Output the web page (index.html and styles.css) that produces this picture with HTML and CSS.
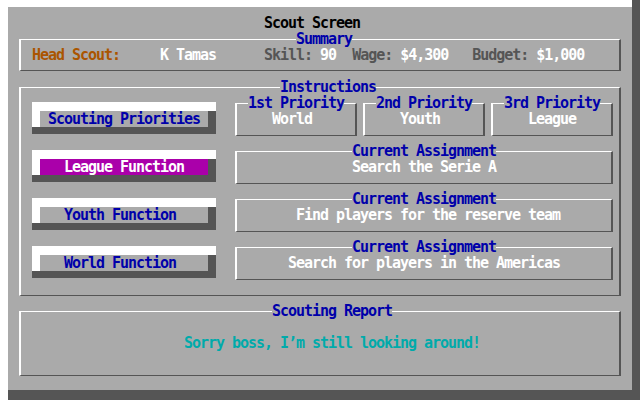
FILE: index.html
```html
<!DOCTYPE html>
<html lang="en">
<head>
<meta charset="utf-8">
<title>Scout Screen</title>
<link rel="stylesheet" href="styles.css">
</head>
<body>
<div class="frame">
  <main class="panel">
    <h1 class="title">Scout Screen</h1>

    <section class="box summary">
      <div class="legend-row shift-r4"><span class="legend">Summary</span></div>
      <div class="summary-line"><span class="orange">Head Scout:</span>     <span class="white">K Tamas</span>      <span class="grey">Skill:</span> <span class="white">90</span>  <span class="grey">Wage:</span> <span class="white">$4,300</span>   <span class="grey">Budget:</span> <span class="white">$1,000</span></div>
    </section>

    <section class="box instructions">
      <div class="legend-row shift-r8"><span class="legend">Instructions</span></div>
      <div class="instr-grid">
        <button class="btn"><span class="face">Scouting Priorities</span></button>
        <div class="priorities">
          <div class="box group">
            <div class="legend-row"><span class="legend">1st Priority</span></div>
            <div class="value shift-l4">World</div>
          </div>
          <div class="box group">
            <div class="legend-row"><span class="legend">2nd Priority</span></div>
            <div class="value shift-l4">Youth</div>
          </div>
          <div class="box group">
            <div class="legend-row"><span class="legend">3rd Priority</span></div>
            <div class="value">League</div>
          </div>
        </div>

        <button class="btn active"><span class="face">League Function</span></button>
        <div class="box group">
          <div class="legend-row"><span class="legend">Current Assignment</span></div>
          <div class="value">Search the Serie A</div>
        </div>

        <button class="btn"><span class="face shift-l4">Youth Function</span></button>
        <div class="box group">
          <div class="legend-row"><span class="legend">Current Assignment</span></div>
          <div class="value shift-r4">Find players for the reserve team</div>
        </div>

        <button class="btn"><span class="face shift-l4">World Function</span></button>
        <div class="box group">
          <div class="legend-row"><span class="legend">Current Assignment</span></div>
          <div class="value">Search for players in the Americas</div>
        </div>
      </div>
    </section>

    <section class="box report">
      <div class="legend-row shift-r12"><span class="legend">Scouting Report</span></div>
      <p class="message shift-r12">Sorry boss, I&rsquo;m still looking around!</p>
    </section>
  </main>
</div>
</body>
</html>
```

FILE: styles.css
```css
* {
  box-sizing: border-box;
}

html,
body {
  margin: 0;
  padding: 0;
}

body {
  width: 640px;
  height: 400px;
  overflow: hidden;
  background: #fff;
  font-family: "DejaVu Sans Mono", "Liberation Mono", monospace;
  font-size: 15px;
  font-weight: bold;
  letter-spacing: -1.03px;
  line-height: 16px;
}

.frame {
  width: 640px;
  height: 400px;
  padding: 7px 8px 10px 8px;
  background:
    linear-gradient(#fff, #fff) 0 0 / 632px 7px no-repeat,
    linear-gradient(#fff, #fff) 0 0 / 8px 100% no-repeat,
    #555;
}

.panel {
  display: block;
  height: 100%;
  background: #aaa;
  padding: 8px 11px 0;
}

.title {
  margin: 0;
  font: inherit;
  height: 16px;
  color: #000;
  text-align: center;
  padding-right: 16px;
}

/* group boxes */
.box {
  border-style: solid;
  border-width: 1px 2px;
  border-color: #fff #555 #555 #fff;
}

.legend-row {
  display: flex;
  justify-content: center;
  height: 16px;
  margin-top: -9px;
}

.legend {
  background: #aaa;
  color: #00a;
}

.summary {
  margin-top: 8px;
  padding-bottom: 7px;
}

.summary-line {
  white-space: pre;
  height: 16px;
  padding-left: 11px;
}

.orange { color: #a50; }
.white { color: #fff; }
.grey { color: #555; }

.instructions {
  margin-top: 16px;
}

.instr-grid {
  display: grid;
  grid-template-columns: 184px 378px;
  column-gap: 19px;
  row-gap: 14px;
  align-items: start;
  padding: 7px 6px 15px 11px;
}

.priorities {
  display: flex;
  gap: 6px;
}

.priorities .group {
  flex: 0 0 122px;
}

.group {
  margin-top: 1px;
  padding-bottom: 8px;
}

.value {
  height: 16px;
  color: #fff;
  text-align: center;
}

/* 3D buttons */
.btn {
  display: block;
  width: 184px;
  height: 32px;
  margin: 0;
  padding: 9px 8px 7px;
  border: 0;
  font: inherit;
  letter-spacing: inherit;
  cursor: pointer;
  background:
    linear-gradient(#fff 9px, transparent 9px, transparent 25px, #555 25px),
    linear-gradient(90deg, #fff 8px, #555 8px);
}

.face {
  display: block;
  height: 16px;
  line-height: 16px;
  background: #aaa;
  color: #00a;
  text-align: center;
}

.btn.active .face {
  background: #a0a;
  color: #fff;
}

.report {
  margin-top: 15px;
  padding-bottom: 24px;
}

.message {
  margin: 16px 0 0;
  height: 16px;
  color: #0aa;
  text-align: center;
}

/* column-grid alignment nudges (text sits on an 8px character grid) */
.shift-r4 { padding-left: 8px; }
.shift-r8 { padding-left: 16px; }
.shift-r12 { padding-left: 24px; }
.shift-l4 { padding-right: 8px; }
```
